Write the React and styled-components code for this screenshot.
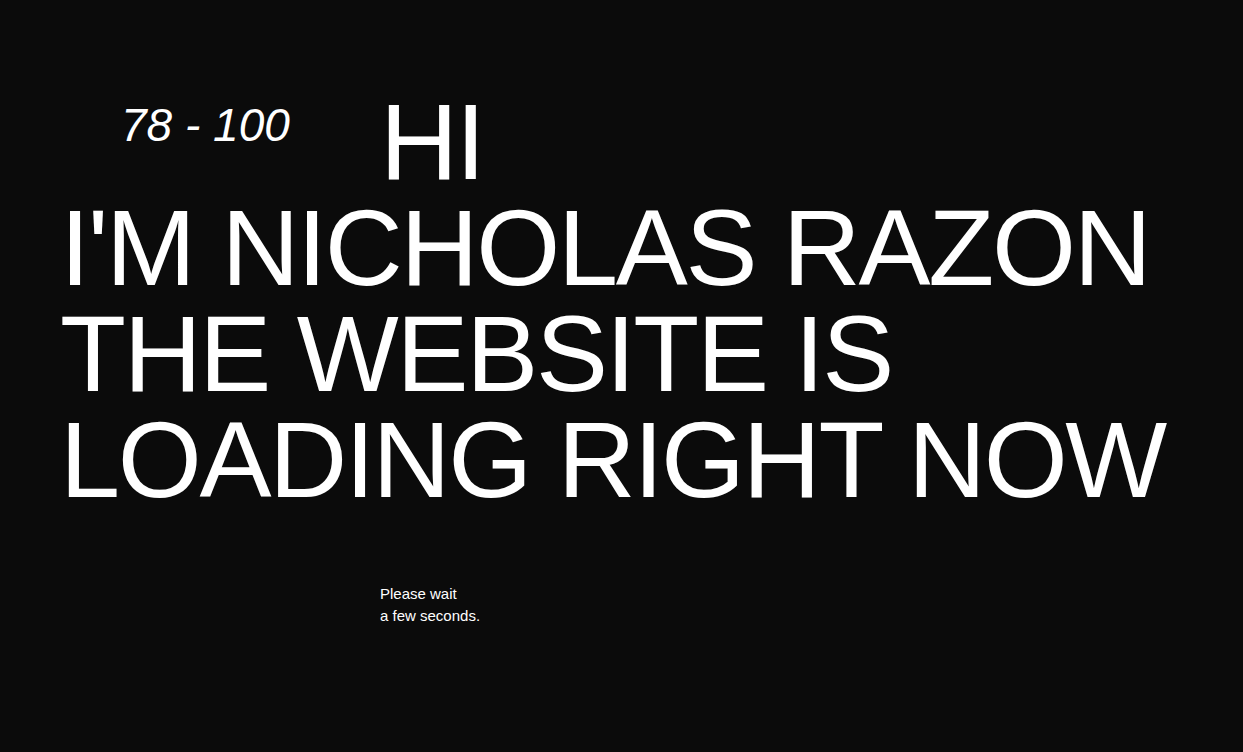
import React from "react";
import styled, { createGlobalStyle } from "styled-components";

const GlobalStyle = createGlobalStyle`
  html, body {
    margin: 0;
    padding: 0;
    background: #0b0b0b;
  }
  body {
    font-family: "Liberation Sans", Arial, sans-serif;
    color: #fff;
  }
`;

const Page = styled.main`
  min-height: 752px;
  box-sizing: border-box;
  padding: 89px 0 0 60px;
  background: #0b0b0b;
`;

const TopRow = styled.div`
  display: flex;
  align-items: flex-start;
`;

const Counter = styled.span`
  width: 259px;
  margin-top: 9px;
  padding-left: 61px;
  font-size: 46px;
  line-height: normal;
  font-style: italic;
`;

const Headline = styled.h1`
  margin: 0;
  font-size: 108px;
  font-weight: 400;
  line-height: 106px;
  letter-spacing: -2.3px;
  white-space: nowrap;
`;

const Line = styled.span`
  display: block;
`;

const Note = styled.p`
  margin: 70px 0 0 320px;
  font-size: 15px;
  line-height: 22px;
`;

export default function App() {
  return (
    <>
      <GlobalStyle />
      <Page>
        <TopRow>
          <Counter>78 - 100</Counter>
          <Headline as="div">HI</Headline>
        </TopRow>
        <Headline>
          <Line>I'M NICHOLAS RAZON</Line>
          <Line>THE WEBSITE IS</Line>
          <Line>LOADING RIGHT NOW</Line>
        </Headline>
        <Note>
          Please wait
          <br />
          a few seconds.
        </Note>
      </Page>
    </>
  );
}
